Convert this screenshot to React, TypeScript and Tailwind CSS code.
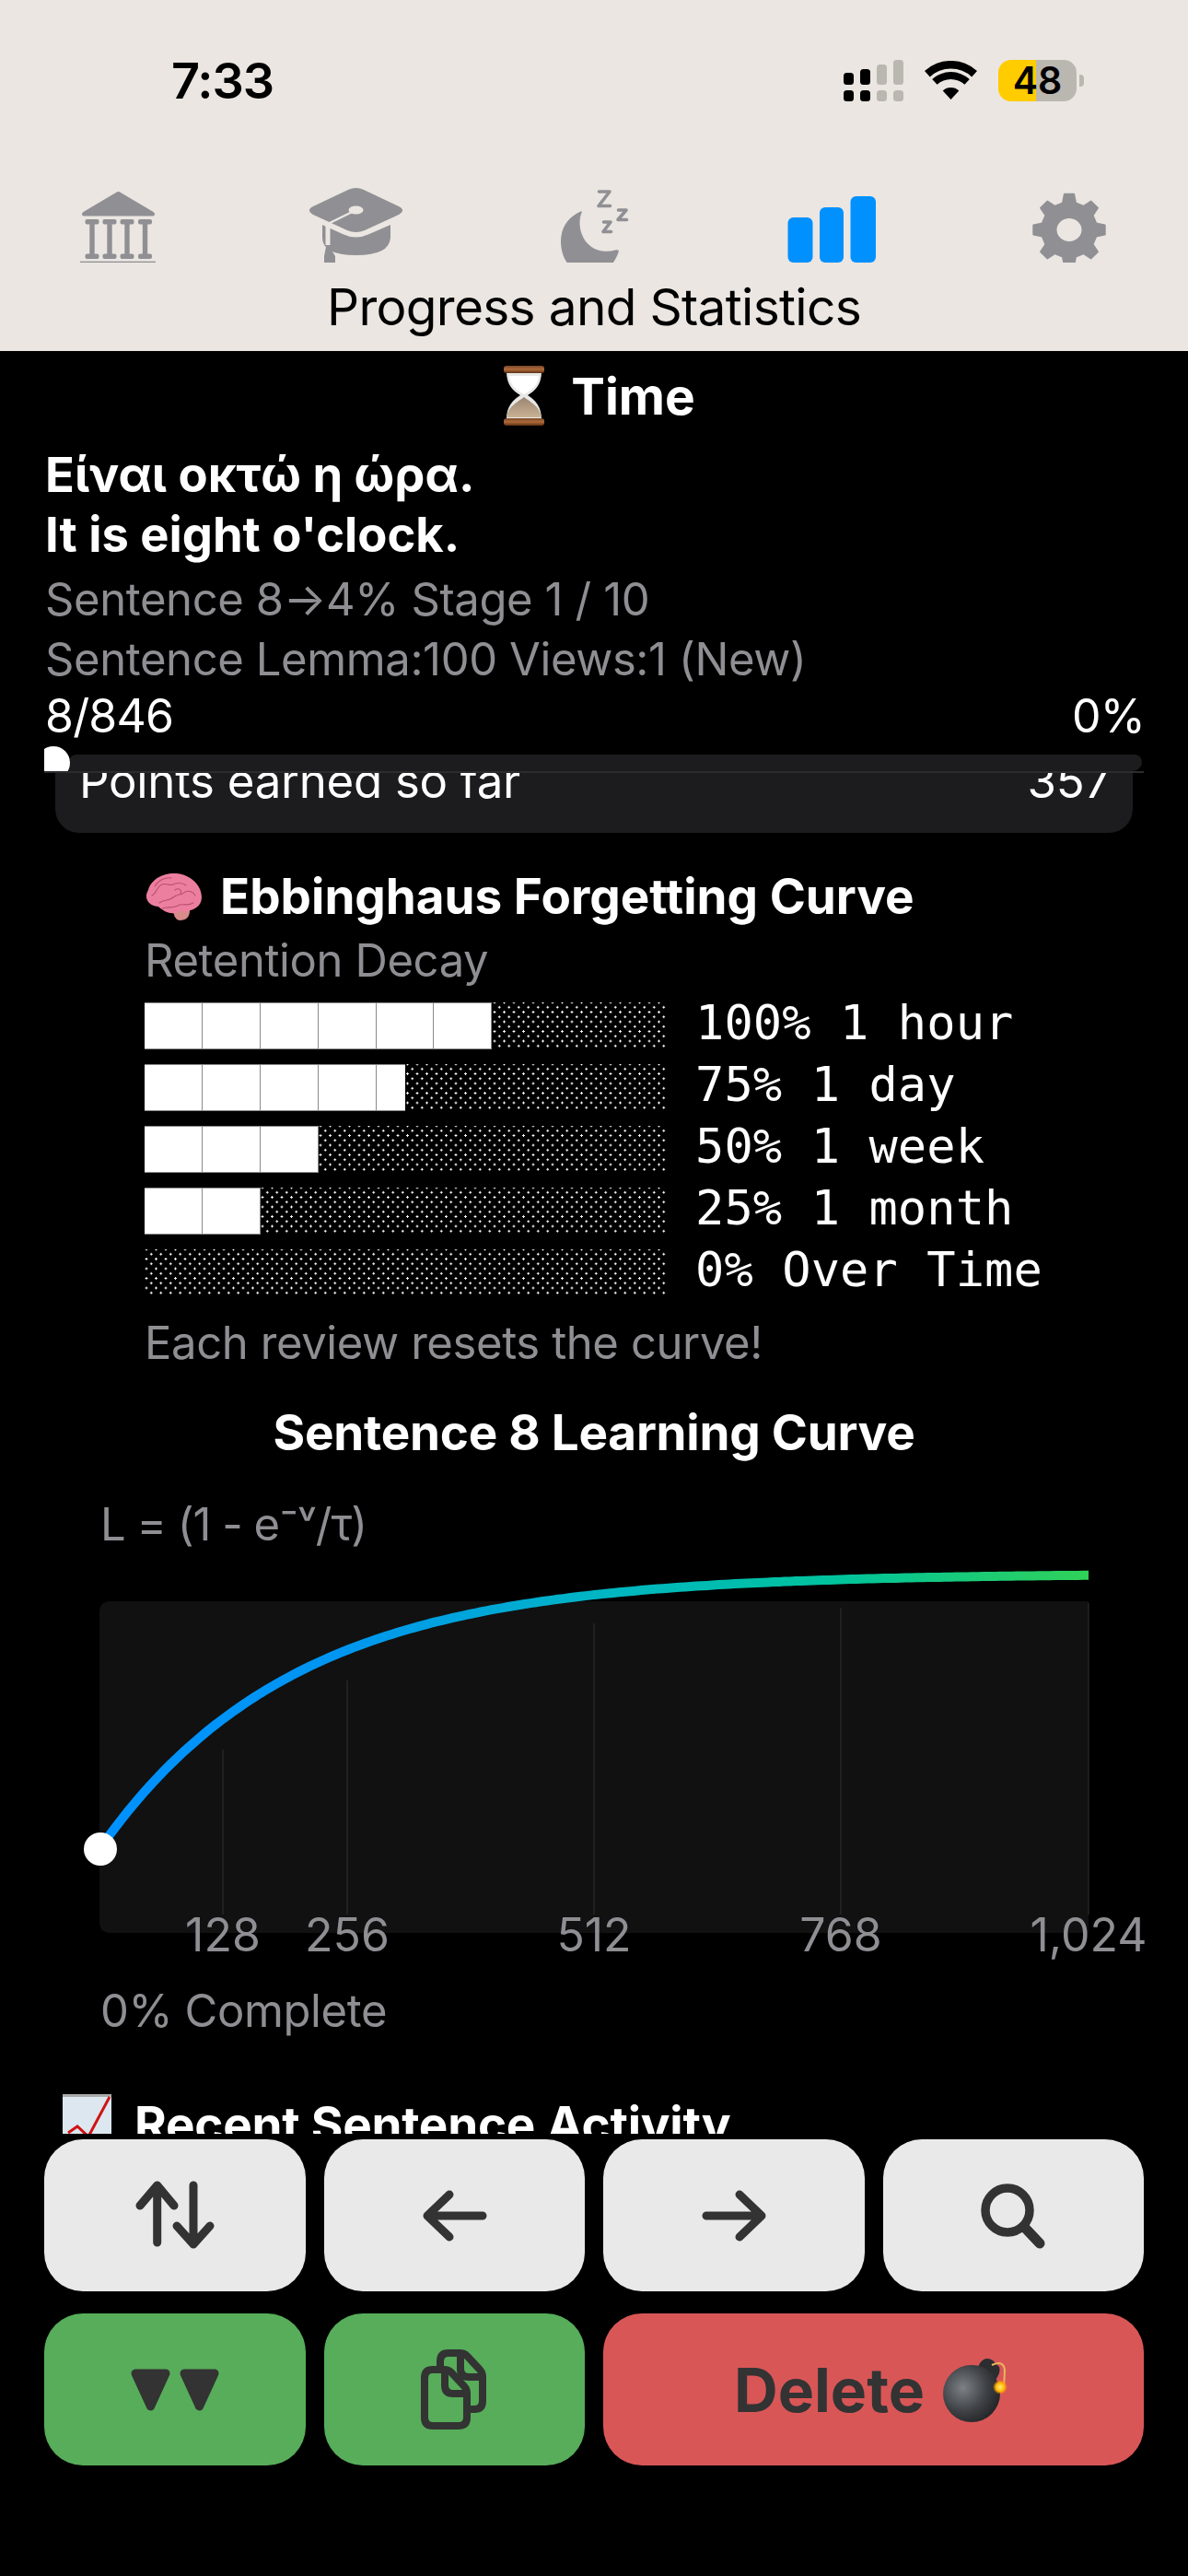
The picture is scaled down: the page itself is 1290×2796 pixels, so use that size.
import React from "react";

const GRAY = "#909094";

function gearPath() {
  const cx = 1161;
  const cy = 249.5;
  const pts: string[] = [];
  for (let k = 0; k < 8; k++) {
    const a = (k * 45 - 90) * (Math.PI / 180);
    const spots: [number, number][] = [
      [-13.5, 30],
      [-7.5, 39],
      [7.5, 39],
      [13.5, 30],
    ];
    spots.forEach(([d, r]) => {
      const t = a + (d * Math.PI) / 180;
      pts.push(`${(cx + r * Math.cos(t)).toFixed(1)} ${(cy + r * Math.sin(t)).toFixed(1)}`);
    });
  }
  return `M${pts.join("L")}Z M${cx - 14.5} ${cy} a14.5 13.5 0 1 0 29 0 a14.5 13.5 0 1 0 -29 0Z`;
}

function curvePath() {
  const pts: string[] = [];
  for (let x = 108; x <= 1182; x += 6) {
    const v = ((x - 108) / 1074) * 1024;
    const y = 2007 - 299 * (1 - Math.exp(-v / 200));
    pts.push(`${x} ${y.toFixed(1)}`);
  }
  return "M" + pts.join("L");
}

function NavIcon({ index, children }: { index: number; children: React.ReactNode }) {
  return (
    <svg viewBox={`${258 * index} 204 258 81`} className="block h-[81px] w-[258px]">
      {children}
    </svg>
  );
}

function BankIcon() {
  const cols = [100, 119, 138, 157.5];
  return (
    <NavIcon index={0}>
      <path
        d="M126 209 Q128.6 207 131 209 L166.5 230 Q170 233.5 166 234.5 L91 234.5 Q87 233.5 90.5 230Z"
        fill={GRAY}
      />
      {cols.map((x) => (
        <g key={x} fill={GRAY}>
          <rect x={x - 7.5} y={238} width={15} height={5.5} rx={2} />
          <rect x={x - 2.7} y={241} width={5.4} height={37} />
          <rect x={x - 7.5} y={275.5} width={15} height={5.5} rx={2} />
        </g>
      ))}
      <rect x={87} y={283.7} width={82} height={1.3} fill={GRAY} />
    </NavIcon>
  );
}

function CapIcon() {
  return (
    <NavIcon index={1}>
      <path
        d="M378 206 Q386.5 202 395 206 L433 224 Q441 228 433 233 L396 250 Q386.5 254 377 250 L340 233 Q332 228 340 224Z"
        fill={GRAY}
      />
      <path
        d="M350 244 L372 254 Q386.5 261 401 254 L424 244 L424 258 Q423 277 386.5 277 Q350 277 350 258Z"
        fill={GRAY}
      />
      <ellipse cx={386.5} cy={228} rx={8} ry={4.5} fill="#ebe6e1" />
      <path d="M386.5 228 L356 243" stroke="#ebe6e1" strokeWidth={2.5} fill="none" />
      <path d="M356 243 L356 266" stroke="#ebe6e1" strokeWidth={5} fill="none" />
      <path d="M354 268 L358 268 L364 278 L364 290 L352 290 L352 278Z" fill={GRAY} />
    </NavIcon>
  );
}

function MoonIcon() {
  return (
    <NavIcon index={2}>
      <path
        d="M630.5 229.5 C 616 236 609 248 609 262 C 609 272 612 281 618 288 L 664 288 C 668 282 671 277 672 272 C 671 271 669 271 668 271.5 C 650 276 636 268 631 252 C 629 245 629 237 631.5 231 C 632 229.7 631.5 229 630.5 229.5Z"
        fill={GRAY}
      />
      <g fill="none" stroke={GRAY} strokeWidth={3.6} strokeLinecap="round" strokeLinejoin="round">
        <path d="M650.5 208 H662 L650 223.5 H662.5" />
        <path d="M671.5 228 H680 L671 238.5 H680.5" />
        <path d="M655.5 241 H663 L655 251.5 H663.5" />
      </g>
    </NavIcon>
  );
}

function BarsIcon() {
  return (
    <NavIcon index={3}>
      <rect x={855.5} y={236} width={27} height={49} rx={6} fill="#0091ff" />
      <rect x={890} y={225} width={26} height={60} rx={6} fill="#0091ff" />
      <rect x={923.5} y={213} width={27.5} height={72} rx={6} fill="#0091ff" />
    </NavIcon>
  );
}

function GearIcon() {
  return (
    <NavIcon index={4}>
      <path
        d={gearPath()}
        fill={GRAY}
        fillRule="evenodd"
        stroke={GRAY}
        strokeWidth={2}
        strokeLinejoin="round"
      />
    </NavIcon>
  );
}

function SignalIcon() {
  const bars = [
    { x: 0, top: 14, c: "#000" },
    { x: 18, top: 10, c: "#000" },
    { x: 36, top: 5, c: "#bab7b1" },
    { x: 54, top: 0, c: "#bab7b1" },
  ];
  return (
    <svg viewBox="0 0 65 45" className="h-[45px] w-[65px]">
      {bars.map((b) => (
        <g key={b.x} fill={b.c}>
          <rect x={b.x} y={b.top} width={11} height={27 - b.top} rx={3.5} />
          <rect x={b.x} y={33} width={11} height={12} rx={3.5} />
        </g>
      ))}
    </svg>
  );
}

function WifiIcon() {
  return (
    <svg viewBox="0 0 57 42" className="h-[42px] w-[57px]">
      <path d="M0 11.1 A42 42 0 0 1 57 11.1 L51.2 17.4 A33.5 33.5 0 0 0 5.8 17.4Z" />
      <path d="M8.2 20 A30 30 0 0 1 48.8 20 L43.4 25.8 A22 22 0 0 0 13.6 25.8Z" />
      <path d="M19.7 32.4 A13 13 0 0 1 37.3 32.4 L28.5 42Z" />
    </svg>
  );
}

function Hourglass() {
  return (
    <svg viewBox="549 397 44 65" className="h-[65px] w-[44px] shrink-0">
      <defs>
        <linearGradient id="wood" x1="0" x2="0" y1="0" y2="1">
          <stop offset="0" stopColor="#7a4a2a" />
          <stop offset="0.5" stopColor="#b06a3a" />
          <stop offset="1" stopColor="#5c2f14" />
        </linearGradient>
        <linearGradient id="sand" x1="0" x2="0" y1="0" y2="1">
          <stop offset="0" stopColor="#9a8570" />
          <stop offset="1" stopColor="#c9b294" />
        </linearGradient>
      </defs>
      <path
        d="M552 403 L590 403 C590 418 583 424 575 429 C583 434 590 441 590 455 L552 455 C552 441 559 434 567 429 C559 424 552 418 552 403Z"
        fill="#e8e8e6"
      />
      <path d="M555 408 L587 408 C586 418 580 423 571 428 C562 423 556 418 555 408Z" fill="#fff" />
      <path d="M571 431 C565 436 553 441 552.5 453 L589.5 453 C589 441 577 436 571 431Z" fill="url(#sand)" />
      <rect x={549} y={397} width={44} height={8} rx={3} fill="url(#wood)" />
      <rect x={549} y={454} width={44} height={8} rx={3} fill="url(#wood)" />
    </svg>
  );
}

function Brain() {
  return (
    <svg viewBox="159 947 62 52" className="h-[52px] w-[62px] shrink-0">
      <path d="M190 986 Q198 984 208 988 Q208 999 197 999 Q190 998 190 986Z" fill="#d98a8a" />
      <path
        d="M163 966 C166 954 180 947 193 948 C208 949 221 960 221 974 C221 985 210 990 197 989 C190 994 180 990 174 984 C165 984 157 976 163 966Z"
        fill="#ec7f9f"
      />
      <g fill="none" stroke="#b9506f" strokeWidth={1.1} strokeLinecap="round" strokeLinejoin="round">
        <path d="M170 962 C174 955 182 952 188 953" />
        <path d="M167 972 C172 970 172 962 178 960 C182 958 186 962 190 960 C195 958 200 958 204 961" />
        <path d="M175 980 C180 976 186 978 190 974 C194 970 200 972 203 968 C207 966 212 968 214 972" />
        <path d="M178 986 C184 984 190 986 195 983 C200 980 206 984 212 980" />
        <path d="M192 966 C196 963 200 966 198 970" />
      </g>
    </svg>
  );
}

function ChartEmoji() {
  return (
    <svg viewBox="68 2274 53 66" className="h-[66px] w-[53px] shrink-0">
      <rect x={68} y={2274} width={53} height={66} fill="#dce7f0" />
      <rect x={68} y={2274} width={53} height={3} fill="#a9a9a9" />
      <path d="M74 2316 L84 2309 L96 2320 L119 2277" fill="none" stroke="#d01414" strokeWidth={3} />
    </svg>
  );
}

function Bomb() {
  return (
    <svg viewBox="1024 2558 70 70" className="h-[70px] w-[70px] shrink-0">
      <defs>
        <radialGradient id="bombBody" cx="0.35" cy="0.4" r="0.75">
          <stop offset="0" stopColor="#7d8084" />
          <stop offset="0.55" stopColor="#3e4145" />
          <stop offset="1" stopColor="#1c1d1f" />
        </radialGradient>
        <radialGradient id="spark">
          <stop offset="0" stopColor="#fff176" />
          <stop offset="0.6" stopColor="#ffb300" />
          <stop offset="1" stopColor="#ff8f00" stopOpacity="0" />
        </radialGradient>
      </defs>
      <path d="M1064 2564 Q1070 2556 1078 2561 L1085 2568 Q1087 2574 1081 2582 L1072 2590 L1058 2577Z" fill="#2b2d30" />
      <circle cx={1055} cy={2597} r={31} fill="url(#bombBody)" />
      <path d="M1077 2566 Q1090 2560 1091 2572 L1090 2590" fill="none" stroke="#e9b45c" strokeWidth={2} />
      <circle cx={1086} cy={2590} r={8} fill="url(#spark)" />
    </svg>
  );
}

function Row({ fill, label }: { fill: number; label: string }) {
  return (
    <div className="flex h-[51px] items-center">
      <div className="flex h-full w-[567px] bg-[radial-gradient(circle,#fff_1px,transparent_1.3px),radial-gradient(circle,#fff_1px,transparent_1.3px)] bg-[length:10.5px_10.5px] bg-[position:2px_0px,7.25px_5.25px]">
        {Array.from({ length: fill }).map((_, i) => (
          <div
            key={i}
            className={
              i % 2 === 1
                ? "h-full w-[31.45px] border-y border-r border-[#8a8a8a] bg-white"
                : "h-full w-[31.45px] border-y border-[#8a8a8a] bg-white"
            }
          />
        ))}
      </div>
      <span className="mb-[6px] ml-[31px] whitespace-pre font-['DejaVu_Sans_Mono',monospace] text-[52px] leading-[51px] tracking-[0.1px] text-white">
        {label}
      </span>
    </div>
  );
}

function LearningChart() {
  const grid = [
    { x: 242, top: 1899, label: "128" },
    { x: 377, top: 1824, label: "256" },
    { x: 645, top: 1762, label: "512" },
    { x: 913, top: 1745, label: "768" },
    { x: 1182, top: 1740, label: "1,024" },
  ];
  return (
    <svg viewBox="0 1700 1290 430" className="mt-[15px] block h-[430px] w-[1290px]">
      <defs>
        <linearGradient id="curve" gradientUnits="userSpaceOnUse" x1="108" x2="1182" y1="0" y2="0">
          <stop offset="0" stopColor="#0091ff" />
          <stop offset="0.25" stopColor="#0096f0" />
          <stop offset="0.5" stopColor="#00b5c4" />
          <stop offset="0.75" stopColor="#00c49c" />
          <stop offset="1" stopColor="#30d158" />
        </linearGradient>
      </defs>
      <path d="M108 1750 q0 -12 12 -12 H1182 V2098 H120 q-12 0 -12 -12Z" fill="#111111" />
      {grid.map((g) => (
        <line key={g.x} x1={g.x} x2={g.x} y1={g.top} y2={2078} stroke="#333335" strokeWidth={1} />
      ))}
      <path d={curvePath()} fill="none" stroke="url(#curve)" strokeWidth={10} />
      <circle cx={109} cy={2007} r={18} fill="#fff" />
      {grid.map((g) => (
        <text
          key={g.label}
          x={g.x}
          y={2118}
          textAnchor="middle"
          fill="#8e8e93"
          fontFamily="Inter, sans-serif"
          fontSize={50}
        >
          {g.label}
        </text>
      ))}
    </svg>
  );
}

function ActionButton({ className, children }: { className: string; children: React.ReactNode }) {
  return (
    <button className={`flex h-[165px] items-center justify-center rounded-[42px] ${className}`}>{children}</button>
  );
}

const DOC = "M471 2573 h12 q5 0 8 3 l14 15 q3 3 3 8 v26 q0 9 -9 9 h-28 q-9 0 -9 -9 v-43 q0 -9 9 -9z";
const FOLD = "M484 2574 v16 q0 9 9 9 h14";

function BottomButtons() {
  const stroke = {
    fill: "none",
    stroke: "#333",
    strokeWidth: 9,
    strokeLinecap: "round" as const,
    strokeLinejoin: "round" as const,
  };
  return (
    <div className="grid grid-cols-4 gap-x-[20px] gap-y-[24px] px-[48px]">
      <ActionButton className="bg-[#e9e9e9]">
        <svg viewBox="146 2366 88 78" className="h-[78px] w-[88px]">
          <path d="M170.7 2434 V2372 M152 2394 L170.7 2372 L189 2394" {...stroke} />
          <path d="M210 2372 V2436 M192 2416 L210 2436 L228 2416" {...stroke} />
        </svg>
      </ActionButton>
      <ActionButton className="bg-[#e9e9e9]">
        <svg viewBox="456 2376 74 58" className="h-[58px] w-[74px]">
          <path d="M524 2405 H464 M488 2382 L464 2405 L488 2428" {...stroke} />
        </svg>
      </ActionButton>
      <ActionButton className="bg-[#e9e9e9]">
        <svg viewBox="456 2376 74 58" className="ml-[3px] h-[58px] w-[74px] -scale-x-100">
          <path d="M524 2405 H464 M488 2382 L464 2405 L488 2428" {...stroke} />
        </svg>
      </ActionButton>
      <ActionButton className="bg-[#e9e9e9]">
        <svg viewBox="1062 2366 76 76" className="h-[76px] w-[76px]">
          <circle cx={1094} cy={2398} r={24} {...stroke} strokeWidth={9.5} />
          <path d="M1112 2416 L1129 2434" {...stroke} strokeWidth={11} />
        </svg>
      </ActionButton>
      <ActionButton className="bg-[#57ad5a]">
        <svg viewBox="138 2568 104 52" className="h-[52px] w-[104px]">
          <path d="M147 2576 H180 L163.5 2612Z" fill="#333" stroke="#333" strokeWidth={9} strokeLinejoin="round" />
          <path d="M200 2576 H233 L216.5 2612Z" fill="#333" stroke="#333" strokeWidth={9} strokeLinejoin="round" />
        </svg>
      </ActionButton>
      <ActionButton className="bg-[#57ad5a]">
        <svg viewBox="454 2547 80 96" className="h-[96px] w-[80px]">
          <g transform="translate(17 -18)">
            <path d={DOC} {...stroke} strokeWidth={8} />
            <path d={FOLD} {...stroke} strokeWidth={8} />
          </g>
          <path d={DOC} {...stroke} strokeWidth={8} fill="#57ad5a" />
          <path d={FOLD} {...stroke} strokeWidth={8} />
        </svg>
      </ActionButton>
      <ActionButton className="col-span-2 gap-[20px] bg-[#d95657] pr-[6px]">
        <span className="text-[66px] font-bold leading-none text-[#333]">Delete</span>
        <Bomb />
      </ActionButton>
    </div>
  );
}

export default function App() {
  return (
    <div className="flex h-[2796px] w-[1290px] flex-col overflow-hidden bg-black font-['Inter',sans-serif] text-white">
      <header className="h-[381px] shrink-0 bg-[#ebe6e1] pt-[57px] text-black">
        <div className="flex h-[60px] items-center justify-between pl-[186px] pr-[113px]">
          <span className="pt-[2px] text-[54px] font-semibold leading-[60px] tracking-[-1px]">7:33</span>
          <div className="flex items-center gap-[23px]">
            <SignalIcon />
            <WifiIcon />
            <div className="flex items-center">
              <div className="flex h-[45px] w-[85px] items-center justify-center rounded-[14px] bg-[linear-gradient(90deg,#ffcc00_48%,#bab7b1_48%)] text-[41px] font-semibold leading-none">
                48
              </div>
              <div className="ml-[3px] h-[13px] w-[5px] rounded-r-[4px] bg-[#bab7b1]" />
            </div>
          </div>
        </div>
        <div className="mt-[87px] flex">
          <BankIcon />
          <CapIcon />
          <MoonIcon />
          <BarsIcon />
          <GearIcon />
        </div>
        <h1 className="mt-[14px] text-center text-[55px] font-normal leading-[68px] tracking-[-0.7px]">
          Progress and Statistics
        </h1>
      </header>

      <section className="shrink-0 pl-[49px] pr-[47px] pt-[16px]">
        <div className="flex items-center justify-center gap-[29px] pl-[10px]">
          <Hourglass />
          <span className="text-[55px] font-bold leading-[64px]">Time</span>
        </div>
        <div className="mt-[21px] text-[52.5px] font-bold leading-[65px]">
          <div>Είναι οκτώ η ώρα.</div>
          <div>It is eight o'clock.</div>
        </div>
        <div className="mt-[5px] text-[49px] leading-[65px] tracking-[-0.4px] text-[#8e8e93]">
          <div>Sentence 8→4% Stage 1 / 10</div>
          <div>Sentence Lemma:100 Views:1 (New)</div>
        </div>
        <div className="-mt-[3px] flex justify-between text-[50px] leading-[64px] tracking-[-0.8px]">
          <span>8/846</span>
          <span>0%</span>
        </div>
      </section>

      <div className="relative mx-[48px] h-[30px] shrink-0 overflow-hidden border-b-2 border-[#2c2c2e]">
        <div className="ml-[27px] mr-[2px] mt-[10px] h-[18px] rounded-t-[8px] rounded-br-[10px] bg-[#1c1c1e]" />
        <div className="absolute -left-[8px] top-[1px] h-[36px] w-[36px] rounded-full bg-white" />
      </div>

      <main className="min-h-0 flex-1 overflow-hidden">
        <div className="mx-[60px] -mt-[39px] flex justify-between rounded-[26px] bg-[#1c1c1e] pb-[26px] pl-[26px] pr-[24px] pt-[18px] text-[51px] leading-[60px] tracking-[-0.3px]">
          <span>Points earned so far</span>
          <span>357</span>
        </div>

        <div className="pl-[157px]">
          <div className="mt-[37px] flex items-center gap-[20px]">
            <Brain />
            <h2 className="text-[53px] font-bold leading-[64px]">Ebbinghaus Forgetting Curve</h2>
          </div>
          <p className="mt-[8px] text-[49px] leading-[60px] tracking-[-0.4px] text-[#8e8e93]">Retention Decay</p>
          <div className="mt-[15px] flex flex-col gap-[16px]">
            <Row fill={12} label="100% 1 hour" />
            <Row fill={9} label="75% 1 day" />
            <Row fill={6} label="50% 1 week" />
            <Row fill={4} label="25% 1 month" />
            <Row fill={0} label="0% Over Time" />
          </div>
          <p className="mt-[21px] text-[49px] leading-[60px] tracking-[-0.4px] text-[#8e8e93]">
            Each review resets the curve!
          </p>
        </div>

        <h2 className="mt-[35px] text-center text-[53px] font-bold leading-[64px] tracking-[-0.25px]">
          Sentence 8 Learning Curve
        </h2>
        <p className="mt-[38px] pl-[109px] text-[49px] leading-[60px] tracking-[-1px] text-[#8e8e93]">
          L = (1 - e⁻ᵛ/τ)
        </p>
        <LearningChart />
        <p className="mt-[23px] pl-[109px] text-[49px] leading-[60px] tracking-[-0.4px] text-[#8e8e93]">0% Complete</p>
        <div className="mt-[60px] flex items-start gap-[25px] pl-[68px]">
          <ChartEmoji />
          <h2 className="mt-[1px] text-[53px] font-bold leading-[64px] tracking-[-0.25px]">Recent Sentence Activity</h2>
        </div>
      </main>

      <footer className="h-[480px] shrink-0 pt-[6px]">
        <BottomButtons />
      </footer>
    </div>
  );
}
